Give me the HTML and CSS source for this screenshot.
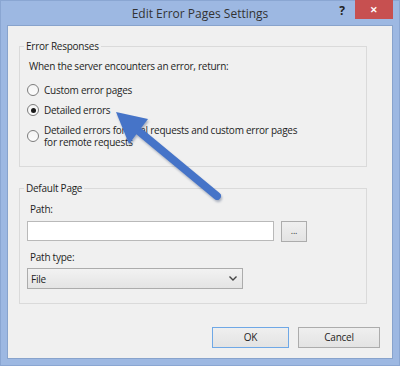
FILE: index.html
```html
<!DOCTYPE html>
<html lang="en">
<head>
  <meta charset="UTF-8">
  <title>Edit Error Pages Settings</title>
  <link rel="stylesheet" href="styles.css">
</head>
<body>

  <div class="window">
    <div class="titlebar">
      <span></span>
      <span class="title">Edit Error Pages Settings</span>
      <div class="controls">
        <span class="help">?</span>
        <span class="close">&#x2715;</span>
      </div>
    </div>

    <div class="client">
      <fieldset class="group responses">
        <legend>Error Responses</legend>
        <p class="prompt">When the server encounters an error, return:</p>
        <label class="radio"><span class="mark"></span><span>Custom error pages</span></label>
        <label class="radio"><span class="mark checked"></span><span>Detailed errors</span></label>
        <label class="radio tall"><span class="mark"></span><span>Detailed errors for local requests and custom error pages<br>for remote requests</span></label>
      </fieldset>

      <fieldset class="group default-page">
        <legend>Default Page</legend>
        <p class="field-label">Path:</p>
        <div class="path-row">
          <div class="textbox"></div>
          <div class="browse">...</div>
        </div>
        <p class="field-label type-label">Path type:</p>
        <div class="select">
          <span>File</span>
          <svg width="8" height="5" viewBox="0 0 8 5"><path d="M0.5 0.5 L4 4 L7.5 0.5" fill="none" stroke="#444" stroke-width="1.4"/></svg>
        </div>
      </fieldset>

      <div class="actions">
        <div class="btn ok">OK</div>
        <div class="btn cancel">Cancel</div>
      </div>
    </div>

    <!-- callout arrow drawn over the dialog -->
    <svg class="arrow" width="400" height="366" viewBox="0 0 400 366">
      <line x1="217" y1="196" x2="135" y2="128" stroke="#4674c8" stroke-width="8" stroke-linecap="round"/>
      <polygon points="116,112 148,119 129,144" fill="#4674c8"/>
    </svg>
  </div>

</body>
</html>
```

FILE: styles.css
```css
:root {
  --frame: #9db8e2;
  --client: #f0f0f0;
  --text: #1e1e1e;
  --group-line: #dadada;
  --control-line: #acacac;
}

body {
  margin: 0;
  font-family: 'Open Sans', 'Noto Sans', sans-serif;
  font-size: 10px;
  letter-spacing: -0.25px;
  color: var(--text);
}

.window {
  position: relative;
  width: 400px;
  height: 366px;
  box-sizing: border-box;
  background: var(--frame);
  border: 1px solid #8aa6d2;
  padding: 0 6px 6px;
  display: flex;
  flex-direction: column;
}

.titlebar {
  height: 24px;
  display: grid;
  grid-template-columns: 1fr auto 1fr;
  align-items: start;
}

.title {
  font-size: 12px;
  letter-spacing: 0;
  line-height: 26px;
  color: #333;
}

.controls {
  display: flex;
  justify-content: flex-end;
}

.help {
  width: 26px;
  line-height: 19px;
  text-align: center;
  font-weight: bold;
  font-size: 12px;
  color: #222;
}

.close {
  width: 38px;
  height: 19px;
  margin-top: -1px;
  background: #c75050;
  color: #fff;
  font-size: 9px;
  font-weight: bold;
  line-height: 20px;
  text-align: center;
}

.client {
  flex: 1;
  background: var(--client);
  border: 1px solid #88a3cc;
  padding: 13px 0 0 11px;
}

.group {
  width: 348px;
  box-sizing: border-box;
  margin: 0;
  padding: 0;
  border: 1px solid var(--group-line);
}

.group legend {
  margin-left: 4px;
  padding: 0 2px;
  line-height: 14px;
}

.responses {
  padding-bottom: 18px;
}

.prompt {
  margin: 5px 0 0 9px;
  line-height: 16px;
}

.radio {
  display: flex;
  align-items: center;
  gap: 5px;
  height: 20px;
  padding-left: 7px;
}

.radio:first-of-type {
  margin-top: 6px;
}

.radio.tall {
  height: 24px;
  margin-top: 4px;
  line-height: 12px;
}

.mark {
  width: 10px;
  height: 10px;
  flex-shrink: 0;
  border: 1px solid #7d7d7d;
  border-radius: 50%;
  background: linear-gradient(#f4f4f4, #fcfcfc);
  display: flex;
  align-items: center;
  justify-content: center;
}

.mark.checked::after {
  content: '';
  width: 5px;
  height: 5px;
  border-radius: 50%;
  background: #1a1a1a;
}

.default-page {
  margin-top: 14px;
  padding-bottom: 14px;
}

.field-label {
  margin: 6px 0 0 10px;
  line-height: 16px;
}

.path-row {
  display: flex;
  align-items: flex-start;
  gap: 7px;
  margin: 4px 0 0 7px;
}

.textbox {
  width: 245px;
  height: 18px;
  background: #fff;
  border: 1px solid #b9b9b9;
}

.browse {
  width: 24px;
  height: 19px;
  border: 1px solid var(--control-line);
  background: linear-gradient(#efefef, #e3e3e3);
  text-align: center;
  line-height: 17px;
  font-size: 9px;
  color: #333;
}

.type-label {
  margin-top: 7px;
}

.select {
  width: 206px;
  height: 19px;
  margin: 3px 0 0 7px;
  border: 1px solid var(--control-line);
  background: linear-gradient(#f2f2f2, #e4e4e4);
  display: flex;
  align-items: center;
  justify-content: space-between;
  padding: 0 5px 0 3px;
}

.actions {
  display: flex;
  justify-content: flex-end;
  gap: 9px;
  margin: 23px 12px 0 0;
}

.btn {
  height: 19px;
  border: 1px solid var(--control-line);
  background: linear-gradient(#efefef, #e3e3e3);
  text-align: center;
  line-height: 19px;
}

.btn.ok {
  width: 75px;
  border-color: #6fa8e6;
}

.btn.cancel {
  width: 80px;
}

.arrow {
  position: absolute;
  left: -1px;
  top: -1px;
  pointer-events: none;
  filter: drop-shadow(1px 2px 1px rgba(40, 60, 100, 0.35));
}
```
